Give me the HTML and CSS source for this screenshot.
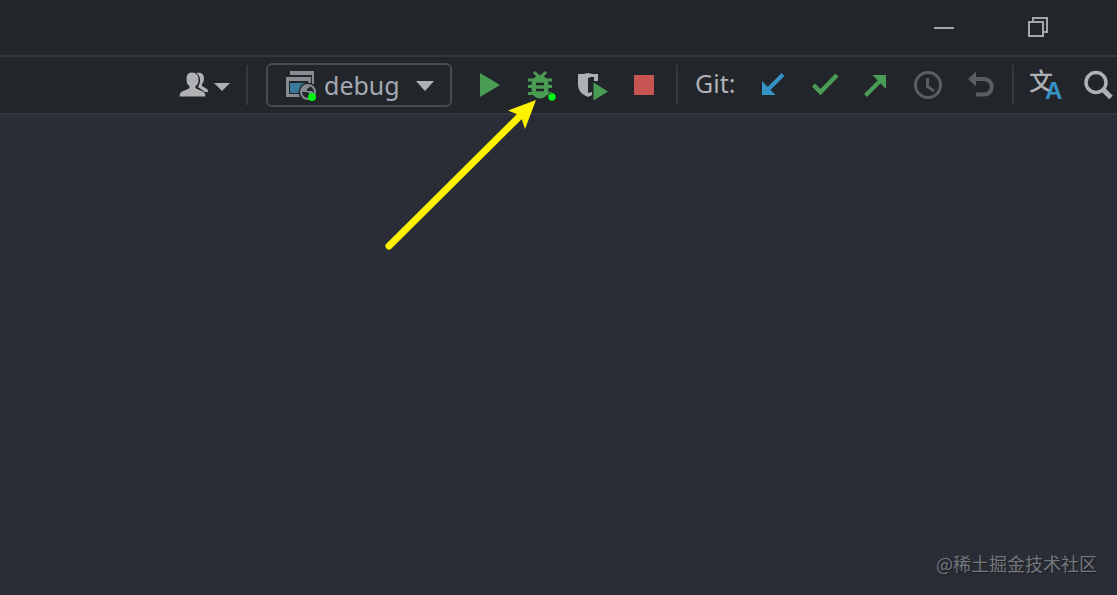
FILE: index.html
```html
<!DOCTYPE html>
<html lang="en">
<head>
<meta charset="utf-8">
<title>IDE toolbar</title>
<link rel="stylesheet" href="styles.css">
</head>
<body>
<header class="titlebar">
  <button class="window-button" aria-label="Minimize"><svg width="20" height="20" viewBox="0 0 20 20"><path d="M0 11h20" stroke="#a5a7a9" stroke-width="2"/></svg></button>
  <button class="window-button" aria-label="Restore"><svg width="20" height="20" viewBox="0 0 20 20" fill="none" stroke="#a5a7a9" stroke-width="2"><path d="M1 5h14v14H1zM5 5V1h14v14h-4"/></svg></button>
</header>
<nav class="toolbar" aria-label="Main toolbar">
  <button class="icon-button users" aria-label="Users">
    <svg width="52" height="32" viewBox="0 0 52 32" fill="#afb1b3">
      <path d="M18 4c5-1 8 1 8 5 0 3-1 5-2 6v2l5 3c1 1 1 2 1 3h-5c-1-3-4-4-5-5 3-5 3-11-2-14z"/>
      <path d="M14 3c-4 0-6 3-6 7 0 4 1 6 3 7v2l-7 3c-2 1-3 3-3 6h27c0-3-1-5-3-6l-7-3v-2c2-1 3-3 3-7 0-4-3-7-7-7z" stroke="#22252a"/>
      <path d="M36 14h16l-8 8z"/>
    </svg>
  </button>
  <span class="separator"></span>
  <div class="group">
    <label class="combo">
      <svg class="combo-icon" width="32" height="34" viewBox="0 0 32 34">
        <path d="M4 2h24v15h-2V6H4z" fill="#858c91"/>
        <path d="M0 8h25v20H0z" fill="#858c91"/>
        <path d="M3 12h19v13H3z" fill="#22252a"/>
        <path d="M4 14h17v10H4z" fill="#39799a"/>
        <circle cx="22" cy="23" r="9.500" fill="#22252a"/>
        <circle cx="22" cy="23" r="7" fill="#22252a" stroke="#858c91" stroke-width="2"/>
        <path d="M15 22c1-4 4-6 7-6l2 2-3 2v2h5l2 2-4 1-3-2h-4z" fill="#858c91"/>
        <circle cx="26" cy="28" r="4" fill="#00f514"/>
      </svg>
      <select class="combo-select" aria-label="Run configuration"><option>debug</option></select>
      <svg class="combo-caret" width="18" height="10" viewBox="0 0 18 10"><path d="M0 0h18L9 10z" fill="#afb1b8"/></svg>
    </label>
    <button class="icon-button" aria-label="Run"><svg width="32" height="32" viewBox="0 0 32 32"><path d="M8 4l20 12L8 28z" fill="#499c54"/></svg></button>
    <div class="debug-anchor">
      <button class="icon-button" aria-label="Debug">
        <svg class="overflowing" width="32" height="32" viewBox="0 0 32 32">
          <path d="M10 3l5 5M22 3l-5 5M4 11h24M4 17.500h24M4 24.500h24" stroke="#499c54" stroke-width="3"/>
          <path d="M9 11c1-3 4-5 7-5s6 2 7 5l1.500 3v6c0 6-4 9.500-8.500 9.500S7.500 26 7.500 20v-6z" fill="#499c54"/>
          <path d="M12 15h8M12 21h8" stroke="#22252a" stroke-width="2.500"/>
          <circle cx="28" cy="28" r="4.500" fill="#22252a"/>
          <circle cx="28" cy="28" r="3.700" fill="#00f514"/>
        </svg>
      </button>
      <svg class="pointer" width="160" height="160" viewBox="0 0 160 160" aria-hidden="true">
        <path d="M9 150L142 18" stroke="#fff200" stroke-width="7" stroke-linecap="round"/>
        <path d="M156 4l-28 10.500 11 4.500 2 2 4 12z" fill="#fff200"/>
      </svg>
    </div>
    <button class="icon-button" aria-label="Run with coverage">
      <svg width="32" height="32" viewBox="0 0 32 32">
        <path d="M2 5c4 0 7 0 10-1 3 1 6 1 10 1v7h-4V8h-3l-3 1v15l4-1v3l-4 2C5 25 2 21 2 15z" fill="#afb1b3"/>
        <path d="M17.500 13.500v18L32 22.500z" fill="#499c54"/>
      </svg>
    </button>
    <button class="icon-button" aria-label="Stop"><svg width="32" height="32" viewBox="0 0 32 32"><path d="M6 6h20v20H6z" fill="#c75450"/></svg></button>
  </div>
  <span class="separator"></span>
  <div class="group">
    <span class="git-label">Git:</span>
    <button class="icon-button" aria-label="Update project"><svg width="32" height="32" viewBox="0 0 32 32"><path d="M27 5.500L12 20.500" stroke="#3592c4" stroke-width="4"/><path d="M6 12l13.500 14H6z" fill="#3592c4"/></svg></button>
    <button class="icon-button" aria-label="Commit"><svg width="32" height="32" viewBox="0 0 32 32"><path d="M5.500 16l7 7L29 6" fill="none" stroke="#499c54" stroke-width="4.500"/></svg></button>
    <button class="icon-button" aria-label="Push"><svg width="32" height="32" viewBox="0 0 32 32"><path d="M5.500 26.500L20 12" stroke="#499c54" stroke-width="4"/><path d="M12.500 6H26v14z" fill="#499c54"/></svg></button>
    <button class="icon-button" aria-label="Show history"><svg width="32" height="32" viewBox="0 0 32 32" fill="none" stroke="#5b5e61" stroke-width="3"><circle cx="16" cy="16" r="12.500"/><path d="M15.500 9v8.500l6.500 4.500"/></svg></button>
    <button class="icon-button" aria-label="Rollback"><svg width="32" height="32" viewBox="0 0 32 32"><path d="M10 10h10a7.800 7.800 0 0 1 0 15.600h-8" fill="none" stroke="#5b5e61" stroke-width="4"/><path d="M4 10l8-7.500v15z" fill="#5b5e61"/></svg></button>
  </div>
  <span class="separator"></span>
  <div class="group">
    <button class="icon-button" aria-label="Translate">
      <svg class="overflowing" width="32" height="32" viewBox="0 0 32 32">
        <text class="translate-source" x="-1" y="21">文</text>
        <text class="translate-target" x="15" y="30">A</text>
      </svg>
    </button>
    <button class="icon-button" aria-label="Search everywhere"><svg width="32" height="32" viewBox="0 0 32 32" fill="none" stroke="#afb1b3"><circle cx="14" cy="13.500" r="10" stroke-width="3.500"/><path d="M21 20.500l8 8" stroke-width="5"/></svg></button>
  </div>
</nav>
<main class="workspace">
  <p class="watermark">@稀土掘金技术社区</p>
</main>
</body>
</html>
```
FILE: styles.css
```css
* {
  box-sizing: border-box;
}

body {
  display: flex;
  flex-direction: column;
  min-height: 100vh;
  margin: 0;
  background: #2a2d35;
  color: #afb1b8;
  font-family: "Noto Sans", "Noto Sans CJK SC", sans-serif;
}

button {
  padding: 0;
  border: 0;
  background: none;
}

svg {
  display: block;
}

.titlebar {
  display: flex;
  justify-content: flex-end;
  height: 57px;
  padding: 0 32px 1px 0;
  background: #22252a;
  border-bottom: 2px solid #33363c;
}

.window-button {
  display: flex;
  align-items: center;
  justify-content: center;
  width: 94px;
}

.toolbar {
  display: flex;
  align-items: center;
  justify-content: flex-end;
  gap: 16px;
  height: 58px;
  padding-right: 3px;
  background: #22252a;
  border-bottom: 2px solid #33363f;
}

.group {
  display: flex;
  align-items: center;
  gap: 20px;
}

.separator {
  width: 2px;
  height: 40px;
  background: #35383d;
}

.icon-button {
  display: block;
  flex: none;
  width: 32px;
  height: 32px;
}

.users {
  width: 52px;
}

.overflowing {
  overflow: visible;
}

.combo {
  position: relative;
  width: 186px;
  margin-left: 2px;
}

.combo-select {
  display: block;
  width: 100%;
  height: 44px;
  padding: 0 40px 0 56px;
  border: 2px solid #484b50;
  border-radius: 6px;
  background: transparent;
  color: #a4a8b2;
  font: 25px/36px "Noto Sans", sans-serif;
  appearance: none;
}

.combo-icon {
  position: absolute;
  top: 6px;
  left: 20px;
  pointer-events: none;
}

.combo-caret {
  position: absolute;
  top: 18px;
  right: 18px;
  pointer-events: none;
}

.debug-anchor {
  position: relative;
}

.pointer {
  position: absolute;
  top: 27px;
  left: -144px;
  z-index: 1;
  pointer-events: none;
}

.git-label {
  width: 42px;
  padding: 0 0 4px 1px;
  font-size: 25px;
  line-height: 32px;
  white-space: nowrap;
}

.translate-source {
  fill: #afb1b3;
  font: 500 24px "Noto Sans CJK SC", sans-serif;
}

.translate-target {
  fill: #3592c4;
  font: 700 24px "Liberation Sans", sans-serif;
}

.workspace {
  display: flex;
  flex: 1;
  align-items: flex-end;
  justify-content: flex-end;
  padding: 20px;
}

.watermark {
  margin: 0;
  color: #74777d;
  font: 18px/24px "Noto Sans CJK SC", sans-serif;
  text-shadow: 1px 1px 1px #1c1e23;
}
```
